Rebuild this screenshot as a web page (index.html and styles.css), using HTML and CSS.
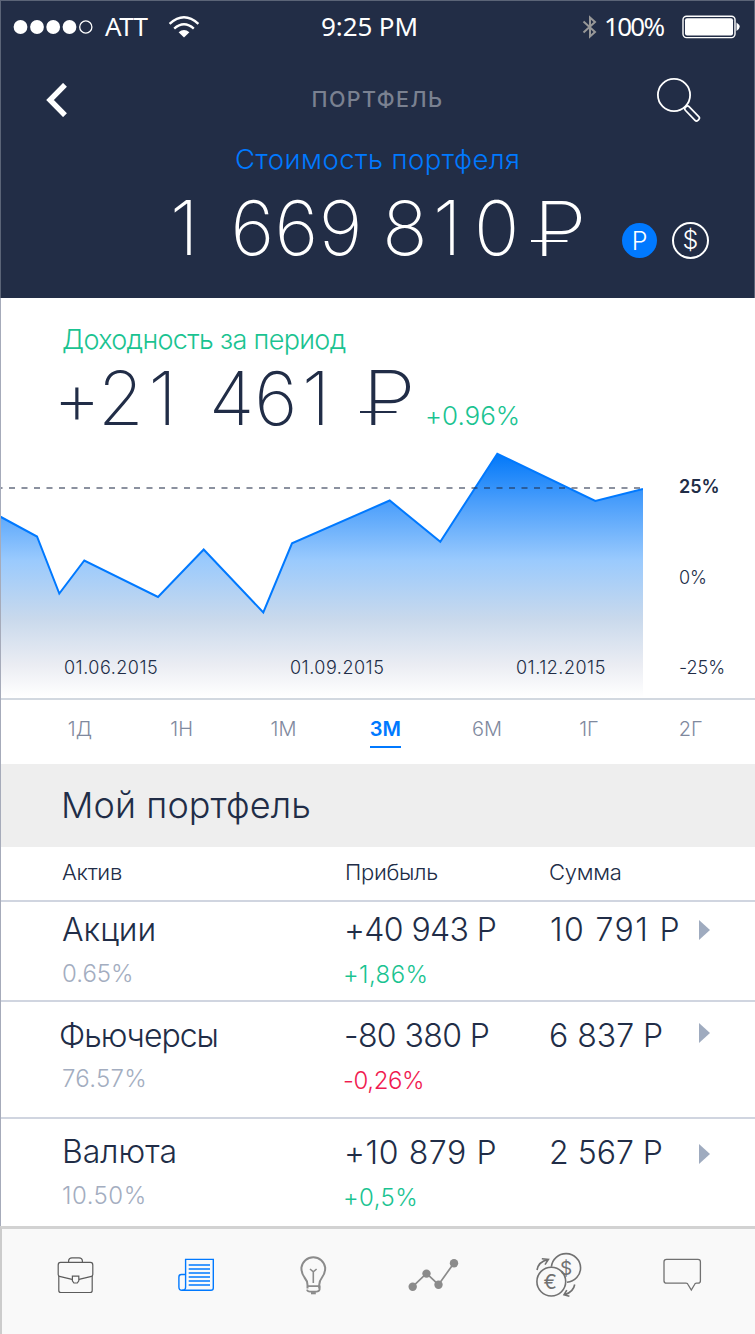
FILE: index.html
```html
<!DOCTYPE html>
<html lang="ru">

<head>
    <meta charset="utf-8">
    <title>Портфель</title>
    <link rel="stylesheet" href="styles.css">
</head>

<body>
    <header class="header">
        <div class="status">
            <svg class="signal" width="82" height="16" viewBox="0 0 82 16">
                <g fill="#fff">
                    <circle cx="7.5" cy="8" r="6.9"/>
                    <circle cx="24" cy="8" r="6.9"/>
                    <circle cx="40.2" cy="8" r="6.9"/>
                    <circle cx="56.5" cy="8" r="6.9"/>
                </g>
                <circle cx="72.8" cy="8" r="6.1" fill="none" stroke="#fff" stroke-width="1.3"/>
            </svg>
            <span class="carrier">ATT</span>
            <svg class="wifi" width="32" height="24" viewBox="0 0 32 24">
                <g fill="none" stroke="#fff" stroke-width="2.4">
                    <path d="M1.6 8.8Q16 -4.3 30.4 8.8"/>
                    <path d="M6.2 13.6Q16 5 25.8 13.6"/>
                </g>
                <path d="M10.6 17.3Q16 12.6 21.4 17.3L16 22.6Z" fill="#fff"/>
            </svg>
            <span class="time">9:25 PM</span>
            <svg class="bluetooth" width="16" height="24" viewBox="0 0 16 24">
                <path d="M1.5 6.5L13 17L8 21.5V2.5L13 7L1.5 17.5" fill="none" stroke="#989898" stroke-width="2"/>
            </svg>
            <span class="percent">100%</span>
            <svg class="battery" width="59" height="24" viewBox="0 0 59 24">
                <rect x="1" y="1.2" width="52" height="21.4" rx="3.5" fill="none" stroke="#fff" stroke-width="1.4"/>
                <rect x="3" y="3.2" width="48" height="17.4" rx="2" fill="#fff"/>
                <path d="M54.5 7.4Q61 11.7 54.5 16Z" fill="#fff"/>
            </svg>
        </div>

        <nav class="nav">
            <svg width="24" height="34" viewBox="0 0 24 34">
                <path d="M19 1.8L4 17L19 32.2" fill="none" stroke="#fff" stroke-width="5.4"/>
            </svg>
            <h1 class="nav-title">ПОРТФЕЛЬ</h1>
            <svg width="46" height="46" viewBox="0 0 46 46" fill="none" stroke="#fff">
                <circle cx="18" cy="18" r="16.1" stroke-width="1.8"/>
                <rect x="0" y="-2.6" width="18" height="5.2" rx="2" stroke-width="1.7" transform="translate(29.8 30) rotate(46)"/>
            </svg>
        </nav>

        <div class="total-label">Стоимость портфеля</div>
        <div class="total">
            <span class="total-value"><span class="one">1</span> 669 8<span class="one">1</span>0</span>
            <span class="ruble">Р</span>
            <div class="currency">
                <span class="coin active">Р</span>
                <span class="coin">$</span>
            </div>
        </div>
    </header>

    <section class="income">
        <div class="income-label">Доходность за период</div>
        <div class="income-row">
            <span class="income-value">+2<span class="one">1</span> 46<span class="one">1</span></span>
            <span class="ruble">Р</span>
            <span class="income-percent">+0.96%</span>
        </div>
    </section>

    <section class="chart">
        <svg class="plot" width="643" height="257" viewBox="0 441 643 257">
            <defs>
                <linearGradient id="fill" gradientUnits="userSpaceOnUse" x1="0" y1="453" x2="0" y2="697">
                    <stop offset="0" stop-color="#0077f9"/>
                    <stop offset="0.2" stop-color="#4a9efb"/>
                    <stop offset="0.44" stop-color="#9acafd"/>
                    <stop offset="0.68" stop-color="#c9d9ec"/>
                    <stop offset="0.87" stop-color="#ebedf3"/>
                    <stop offset="1" stop-color="#ffffff"/>
                </linearGradient>
            </defs>
            <path fill="url(#fill)" d="M0 516.5L37 536.5L59.3 593.5L84.3 560.5L158 597L203.7 549.5L263.3 612.5L292 543.3L389.7 500.5L440.3 541.7L497.3 453.7L595.3 501L643 489V698H0Z"/>
            <path fill="none" stroke="#0079ff" stroke-width="2" d="M0 516.5L37 536.5L59.3 593.5L84.3 560.5L158 597L203.7 549.5L263.3 612.5L292 543.3L389.7 500.5L440.3 541.7L497.3 453.7L595.3 501L643 489"/>
            <path stroke="#212d47" stroke-opacity="0.52" stroke-width="2" stroke-dasharray="6 6.5" stroke-dashoffset="3.5" d="M0 488H643"/>
        </svg>
        <div class="dates">
            <span>01.06.2015</span>
            <span>01.09.2015</span>
            <span>01.12.2015</span>
        </div>
        <div class="scale">
            <span class="current">25%</span>
            <span>0%</span>
            <span>-25%</span>
        </div>
    </section>

    <div class="periods">
        <span>1Д</span>
        <span>1Н</span>
        <span>1М</span>
        <span class="selected">3М</span>
        <span>6М</span>
        <span>1Г</span>
        <span>2Г</span>
    </div>

    <h2 class="section-title">Мой портфель</h2>

    <div class="row head">
        <span>Актив</span>
        <span>Прибыль</span>
        <span>Сумма</span>
    </div>

    <div class="row stocks">
        <div>
            <div class="name">Акции</div>
            <div class="share">0.65%</div>
        </div>
        <div>
            <div class="profit">+40 943 Р</div>
            <div class="change up">+1,86%</div>
        </div>
        <div class="sum">10 791 Р</div>
        <i class="arrow"></i>
    </div>

    <div class="row futures">
        <div>
            <div class="name">Фьючерсы</div>
            <div class="share">76.57%</div>
        </div>
        <div>
            <div class="profit">-80 380 Р</div>
            <div class="change down">-0,26%</div>
        </div>
        <div class="sum">6 837 Р</div>
        <i class="arrow"></i>
    </div>

    <div class="row cash">
        <div>
            <div class="name">Валюта</div>
            <div class="share">10.50%</div>
        </div>
        <div>
            <div class="profit">+10 879 Р</div>
            <div class="change up">+0,5%</div>
        </div>
        <div class="sum">2 567 Р</div>
        <i class="arrow"></i>
    </div>

    <footer class="tabbar">
        <!-- briefcase -->
        <svg viewBox="0 0 61 61" stroke="#5c5c5c" stroke-width="1.2">
            <path d="M27 34.3L14.5 31.3Q13.2 31 13.2 29.5V20Q13.2 17.4 15.5 17.4H45.5Q47.8 17.4 47.8 20V29.5Q47.8 31 46.5 31.3L34 34.3"/>
            <path d="M13.8 31V45.5Q13.8 47.5 15.8 47.5H45.2Q47.2 47.5 47.2 45.5V31"/>
            <path d="M23.6 17V15.8Q23.8 12.8 27 12.8H34Q37.2 12.8 37.4 15.8V17"/>
            <path d="M27.4 31.2H33.8V35.8L32.3 38H28.9L27.4 35.8Z"/>
        </svg>
        <!-- newspaper -->
        <svg viewBox="0 0 61 61" stroke="#0079ff" stroke-width="1.4">
            <path d="M19.6 42V14.4H47.3V43Q47.3 45.3 45 45.3H16Q12.9 45.3 12.9 42V32Q12.9 29.5 15.4 29.5H19.6"/>
            <path d="M19.6 42Q19.6 45.3 16.3 45.3"/>
            <path d="M22.7 20H44M22.7 24H44M22.7 28H44M22.7 32H44M22.7 36H44M22.7 40H44"/>
        </svg>
        <!-- bulb -->
        <svg viewBox="0 0 61 61" stroke="#8b8b8b" stroke-width="2">
            <path d="M20.5 43.5V40Q20.5 36 17.5 32.5Q14.4 28.5 14.4 22.7A12 12 0 0 1 38.2 22.7Q38.2 28.5 35 32.5Q32.2 36 32.2 40V43.5"/>
            <path d="M26.3 38V26.5M23 24L26.3 26.8L29.6 24" stroke-width="1.6"/>
            <path d="M20 41.2H32.7M20 44.6Q20.5 46.6 23 46.6H29.6Q32 46.6 32.6 44.6V40.5" stroke-width="1.8"/>
            <path d="M24 48.2H28.8" stroke-width="2.2"/>
        </svg>
        <!-- trend -->
        <svg viewBox="0 0 61 61" stroke="#8b8b8b" stroke-width="1.7">
            <path d="M4.7 41.7L18.5 28.5L30.5 39.7L46 18"/>
            <g fill="#8b8b8b" stroke="none">
                <circle cx="4.7" cy="41.7" r="4.2"/>
                <circle cx="18.5" cy="28.6" r="4.2"/>
                <circle cx="30.5" cy="39.7" r="4.2"/>
                <circle cx="46" cy="18.2" r="4.2"/>
            </g>
        </svg>
        <!-- exchange -->
        <svg viewBox="0 0 61 61" stroke="#717171" stroke-width="1.6">
            <path d="M22.4 21.8A14.6 14.3 0 1 1 38 37.2"/>
            <circle cx="22.3" cy="36.6" r="14.4"/>
            <path d="M8 25Q9.5 16.5 19 14.6M12.8 13.8L19.4 14.5L16 19.6"/>
            <path d="M45.7 39.5Q44.5 47 35.6 49.7M37.8 45.2L35 49.8L40.4 51.2"/>
            <text class="sign" x="37.2" y="29.9" font-size="19">$</text>
            <text class="sign" x="21.2" y="43.8" font-size="20">€</text>
        </svg>
        <!-- chat -->
        <svg viewBox="0 0 61 61" stroke="#717171" stroke-width="1.3">
            <path d="M16.5 14.3H48Q50.4 14.3 50.4 16.7V35.7Q50.4 38.2 48 38.2H46.5Q45 38.2 44.3 40L41.3 45L38.3 40Q37.6 38.2 36 38.2H16.5Q14 38.2 14 35.7V16.7Q14 14.3 16.5 14.3Z"/>
        </svg>
    </footer>
</body>

</html>
```

FILE: styles.css
```css
* {
    box-sizing: border-box;
}

body {
    position: relative;
    width: 755px;
    height: 1334px;
    margin: 0;
    overflow: hidden;
    background-color: #ffffff;
    color: #212d47;
    font-family: Inter, "Liberation Sans", sans-serif;
    font-weight: 300;
    font-feature-settings: "calt" 0;
    white-space: nowrap;
}

/* thin line down the left edge of the screen */
body::after {
    content: "";
    position: absolute;
    left: 0;
    top: 298px;
    width: 1px;
    height: 928px;
    background-color: #a6abba;
}

/* header */
.header {
    height: 298px;
    background-color: #222d46;
    border: 1px solid #5b6477;
    border-bottom: none;
    color: #ffffff;
}

.status {
    display: flex;
    align-items: center;
    height: 51px;
    padding-left: 12px;
    font-family: "Noto Sans", sans-serif;
    font-weight: 400;
    font-size: 26px;
    line-height: 51px;
}

.carrier {
    width: 43px;
    margin-left: 10px;
    letter-spacing: -0.6px;
}

.wifi {
    margin-left: 20px;
}

.time {
    width: 98px;
    margin-left: 121px;
    letter-spacing: -0.1px;
}

.bluetooth {
    margin-left: 163px;
}

.percent {
    width: 60px;
    margin-left: 6px;
    letter-spacing: -1.7px;
}

.battery {
    margin-left: 18px;
}

.nav {
    display: flex;
    align-items: center;
    justify-content: space-between;
    height: 96px;
    padding: 0 52px 0 45px;
}

.nav-title {
    margin: -2px 0 0 29px;
    color: #7a8191;
    font-size: 21.5px;
    font-weight: 500;
    letter-spacing: 1.4px;
}

.total-label {
    margin-top: -7px;
    padding-left: 234px;
    color: #0079ff;
    font-size: 27.5px;
    letter-spacing: 0.45px;
    line-height: 36px;
}

.total {
    display: flex;
    align-items: center;
    height: 101px;
    padding-left: 164px;
    font-weight: 200;
    font-size: 75px;
}

.total-value {
    width: 366px;
    letter-spacing: 0.4px;
    word-spacing: -2px;
}

/* extra room around the narrow digit */
.one {
    margin: 0 12px 0 5px;
}

.ruble {
    position: relative;
    width: 50px;
    padding-left: 2px;
    font-weight: 200;
    font-size: 76px;
    transform: scaleX(1.14);
    transform-origin: left;
}

/* crossbar of the ruble sign */
.ruble::after {
    content: "";
    position: absolute;
    left: 0;
    bottom: 32px;
    width: 32px;
    height: 2px;
    background-color: currentColor;
}

.income .ruble::after {
    bottom: 26px;
}

.currency {
    display: flex;
    gap: 14px;
    margin: 25px 0 0 40px;
}

.coin {
    width: 37px;
    height: 37px;
    border: 2px solid #ffffff;
    border-radius: 50%;
    font-size: 25px;
    font-weight: 300;
    line-height: 33px;
    text-align: center;
}

.coin.active {
    width: 35px;
    height: 35px;
    margin: 1px;
    border: none;
    background-color: #0079ff;
    line-height: 36px;
}

/* income */
.income {
    height: 143px;
    padding: 24px 0 0 62px;
}

.income-label {
    color: #1ac391;
    font-size: 27px;
    letter-spacing: -0.65px;
    line-height: 36px;
}

.income-row {
    display: flex;
    align-items: baseline;
    height: 84px;
    margin: -3px 0 0 -9px;
    font-weight: 200;
    font-size: 74px;
    line-height: 84px;
}

.income-value {
    width: 307px;
    letter-spacing: -0.2px;
}

.income-percent {
    margin-left: 15px;
    color: #1ac391;
    font-size: 26px;
    font-weight: 300;
}

/* chart */
.chart {
    position: relative;
    display: flex;
    height: 259px;
    border-bottom: 2px solid #d2d8e0;
}

.plot {
    display: block;
}

.dates {
    position: absolute;
    left: 64px;
    bottom: 17px;
    display: flex;
    gap: 132px;
    font-size: 18px;
    line-height: 26px;
    letter-spacing: 0.5px;
}

.dates span {
    width: 94px;
}

.scale {
    display: flex;
    flex-direction: column;
    justify-content: space-between;
    padding: 33px 0 17px 36px;
    font-size: 18px;
    line-height: 26px;
}

.scale .current {
    font-weight: 600;
}

/* periods */
.periods {
    display: grid;
    grid-template-columns: repeat(7, 101.8px);
    justify-items: center;
    height: 64px;
    padding: 10px 0 0 29px;
    color: #7f899e;
    font-size: 20px;
    line-height: 38px;
}

.periods .selected {
    height: 38px;
    border-bottom: 2px solid #0079ff;
    color: #0079ff;
    font-weight: 600;
}

.section-title {
    height: 83px;
    margin: 0;
    padding-left: 61px;
    background-color: #eeeeee;
    font-size: 36px;
    font-weight: 300;
    letter-spacing: 0.1px;
    line-height: 83px;
}

/* table */
.row {
    display: grid;
    grid-template-columns: 283px 204px 150px 12px;
    padding-left: 62px;
    border-bottom: 2px solid #d0d5e0;
}

.head {
    height: 55px;
    font-size: 22px;
    letter-spacing: -0.3px;
    line-height: 50px;
}

.stocks {
    height: 100px;
    padding-top: 8px;
}

.futures {
    height: 117px;
    padding-top: 14px;
}

.cash {
    height: 107px;
    padding-top: 13px;
    border-bottom: none;
}

.name,
.profit,
.sum {
    font-size: 32px;
    line-height: 40px;
}

.profit {
    margin-left: -1px;
    letter-spacing: -0.6px;
}

.share,
.change {
    margin-top: 5px;
    font-size: 24px;
    line-height: 38px;
}

.share {
    color: #a3adc0;
}

.change {
    margin: 6px 0 0 -2px;
}

.up {
    color: #1ac391;
    letter-spacing: 0.4px;
}

.down {
    color: #f01a50;
    letter-spacing: -0.4px;
}

.arrow {
    width: 0;
    height: 0;
    margin-top: 10px;
    border-left: 11px solid #9fabbf;
    border-top: 10.5px solid transparent;
    border-bottom: 10.5px solid transparent;
}

.stocks .sum {
    padding-left: 1px;
    letter-spacing: 1.4px;
}

.futures .name {
    margin-left: -3px;
    letter-spacing: -1px;
}

.futures .share {
    margin-top: 4px;
    letter-spacing: 0.3px;
}

.futures .arrow {
    margin-top: 7px;
}

.cash .share {
    letter-spacing: 0.5px;
}

.cash .profit {
    margin-top: 1px;
    letter-spacing: 0.6px;
}

.cash .sum {
    padding-top: 1px;
}

.cash .arrow {
    margin-top: 12px;
}

/* tab bar */
.tabbar {
    display: grid;
    grid-template-columns: repeat(6, 121px);
    justify-items: center;
    height: 109px;
    padding: 16px 0 0 13px;
    border-top: 3px solid #d2d2d2;
    border-left: 2px solid #cccccc;
    background-color: #f9f9f9;
}

.tabbar svg {
    width: 61px;
    height: 61px;
    fill: none;
}

.tabbar .sign {
    fill: #717171;
    stroke: none;
    text-anchor: middle;
    font-weight: 400;
}
```
